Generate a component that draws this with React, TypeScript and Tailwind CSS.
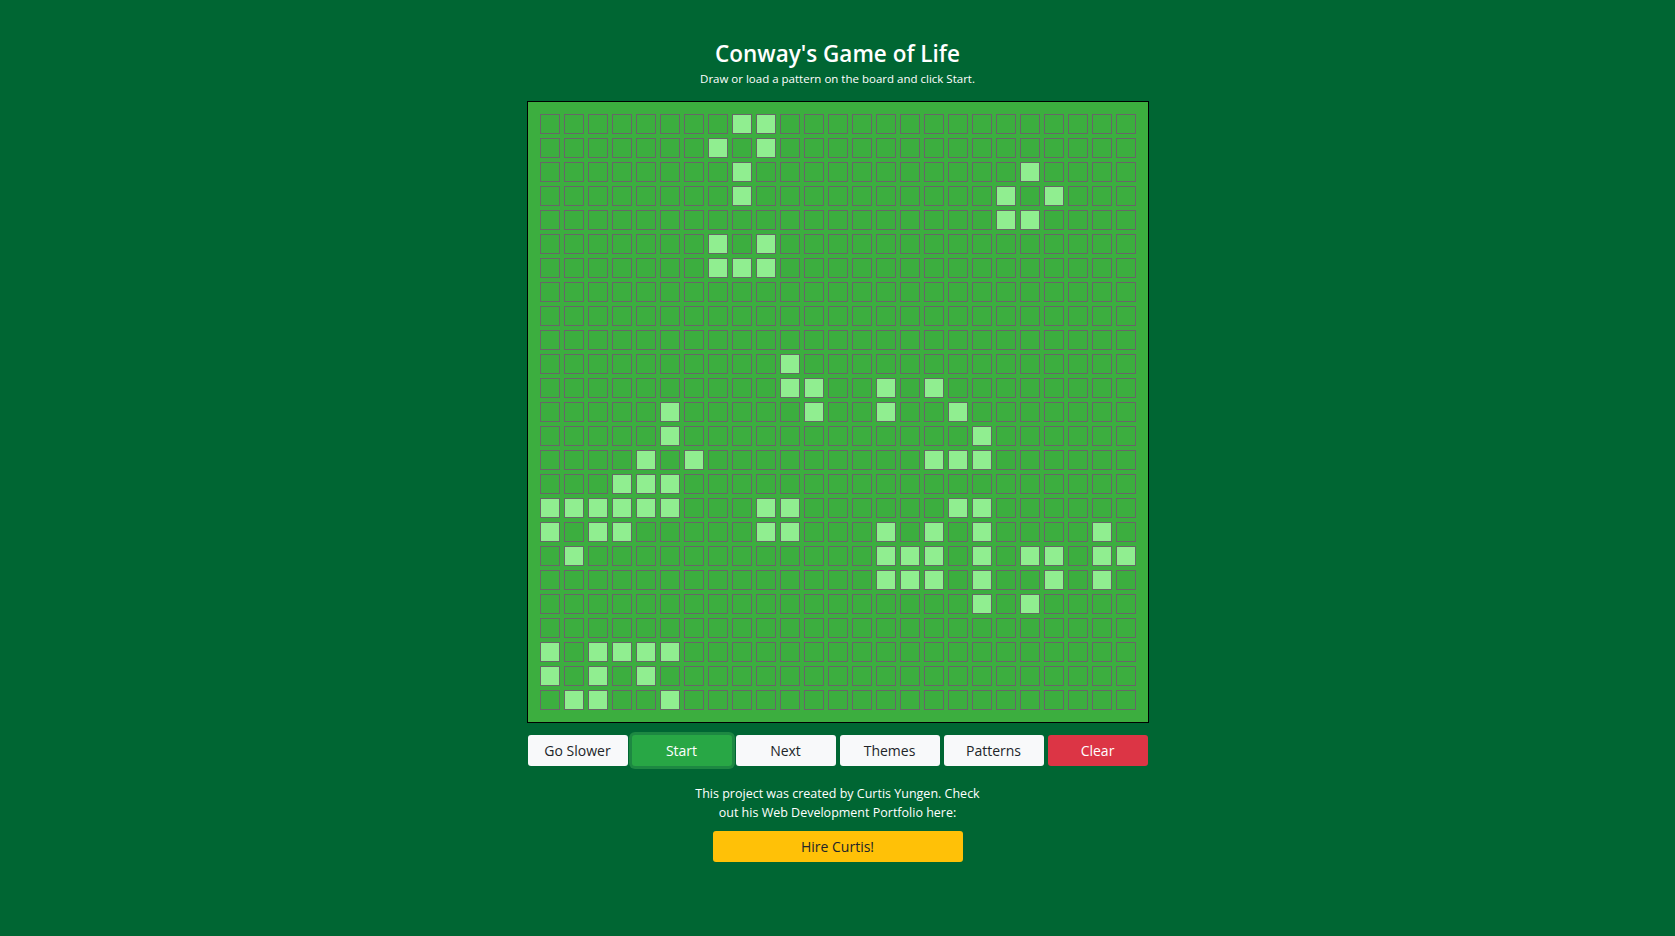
import React from "react";

const SIZE = 25;

// live cells, [row, col]
const alive: [number, number][] = [
  [0, 8], [0, 9],
  [1, 7], [1, 9],
  [2, 8], [2, 20],
  [3, 8], [3, 19], [3, 21],
  [4, 19], [4, 20],
  [5, 7], [5, 9],
  [6, 7], [6, 8], [6, 9],
  [10, 10],
  [11, 10], [11, 11], [11, 14], [11, 16],
  [12, 5], [12, 11], [12, 14], [12, 17],
  [13, 5], [13, 18],
  [14, 4], [14, 6], [14, 16], [14, 17], [14, 18],
  [15, 3], [15, 4], [15, 5],
  [16, 0], [16, 1], [16, 2], [16, 3], [16, 4], [16, 5], [16, 9], [16, 10], [16, 17], [16, 18],
  [17, 0], [17, 2], [17, 3], [17, 9], [17, 10], [17, 14], [17, 16], [17, 18], [17, 23],
  [18, 1], [18, 14], [18, 15], [18, 16], [18, 18], [18, 20], [18, 21], [18, 23], [18, 24],
  [19, 14], [19, 15], [19, 16], [19, 18], [19, 21], [19, 23],
  [20, 18], [20, 20],
  [22, 0], [22, 2], [22, 3], [22, 4], [22, 5],
  [23, 0], [23, 2], [23, 4],
  [24, 1], [24, 2], [24, 5],
];

const liveSet = new Set(alive.map(([r, c]) => `${r}-${c}`));

const Board = () => {
  const rows = [];
  for (let r = 0; r < SIZE; r++) {
    const cells = [];
    for (let c = 0; c < SIZE; c++) {
      const on = liveSet.has(`${r}-${c}`);
      cells.push(
        <div
          key={c}
          className={`m-[2px] h-[20px] w-[20px] border border-[#676767] ${
            on ? "bg-[#90ee90]" : "bg-[#3cae3f]"
          }`}
        />
      );
    }
    rows.push(
      <div key={r} className="flex">
        {cells}
      </div>
    );
  }
  return (
    <div className="mx-auto w-[622px] border border-black bg-[#3cae3f] p-[10px]">
      {rows}
    </div>
  );
};

const btn =
  "h-[31px] w-[100px] rounded-[3px] text-[14px] leading-[21px] text-[#212529]";

const App = () => {
  return (
    <div
      className="min-h-screen bg-[#006633] pt-[39px] text-white"
      style={{ fontFamily: '"Open Sans", sans-serif' }}
    >
      <h1 className="text-center text-[22.5px] font-semibold leading-[29px]">
        Conway's Game of Life
      </h1>
      <p className="mt-[2px] text-center text-[11.5px] leading-[18px]">
        Draw or load a pattern on the board and click Start.
      </p>
      <div className="mt-[13px]">
        <Board />
      </div>
      <div className="mx-auto mt-[12px] flex w-[620px] gap-[4px]">
        <button className={`${btn} bg-[#f8f9fa]`}>Go Slower</button>
        <button
          className={`${btn} bg-[#28a745] text-white shadow-[0_0_0_3px_rgba(32,140,68,0.9)]`}
        >
          Start
        </button>
        <button className={`${btn} bg-[#f8f9fa]`}>Next</button>
        <button className={`${btn} bg-[#f8f9fa]`}>Themes</button>
        <button className={`${btn} bg-[#f8f9fa]`}>Patterns</button>
        <button className={`${btn} bg-[#dc3545] text-white`}>Clear</button>
      </div>
      <p className="mt-[18px] text-center text-[12.5px] leading-[19px]">
        This project was created by Curtis Yungen. Check
        <br />
        out his Web Development Portfolio here:
      </p>
      <div className="mt-[9px] flex justify-center">
        <button className={`${btn} w-[250px] bg-[#ffc107]`}>Hire Curtis!</button>
      </div>
    </div>
  );
};

export default App;
